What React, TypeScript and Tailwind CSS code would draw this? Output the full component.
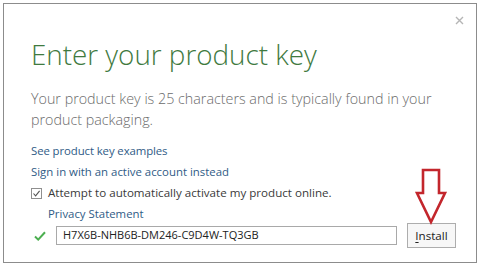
import React from 'react';

const font = { fontFamily: '"Open Sans", "Noto Sans", sans-serif' };

const App: React.FC = () => {
  return (
    <div className="w-[481px] h-[267px] bg-white overflow-hidden pt-[3px] pl-[3px]" style={font}>
      <div className="relative w-[474px] h-[260px] border border-[#8c8c8c] bg-white pl-[27px] pr-[20px]">
        {/* close */}
        <svg className="absolute top-[12px] right-[12px]" width="9" height="9" viewBox="0 0 9 9">
          <path d="M1 1 L8 8 M8 1 L1 8" stroke="#b5b5b5" strokeWidth="1.4" />
        </svg>

        <h1 className="mt-[32px] text-[27.8px] leading-[36px] font-light text-[#3f7a3f]">
          Enter your product key
        </h1>

        <p className="mt-[16px] text-[14.3px] leading-[21px] font-light text-[#6b6b6b] w-[420px]">
          Your product key is 25 characters and is typically found in your product packaging.
        </p>

        <div className="mt-[13px] flex flex-col gap-[5px] text-[11.4px] leading-[16px] text-[#2f5b86]">
          <span className="tracking-[-0.1px]">See product key examples</span>
          <span>Sign in with an active account instead</span>
        </div>

        <label className="mt-[5px] flex items-center gap-[6px] text-[11.6px] leading-[16px] text-[#3a3a3a]">
          <span className="w-[11px] h-[11px] border border-[#8f8f8f] bg-white flex items-center justify-center">
            <svg width="9" height="9" viewBox="0 0 9 9">
              <path d="M1.5 4.5 L3.6 6.8 L7.6 1.8" fill="none" stroke="#555" strokeWidth="1.1" />
            </svg>
          </span>
          Attempt to automatically activate my product online.
        </label>

        <div className="mt-[5px] pl-[17px] text-[11.4px] leading-[16px] text-[#2f5b86]">Privacy Statement</div>

        <div className="mt-[1px] flex items-center">
          <svg className="ml-[3px]" width="12" height="10" viewBox="0 0 12 10">
            <path d="M1 5.5 L4.2 8.6 L11 1.2" fill="none" stroke="#4caf50" strokeWidth="2" />
          </svg>
          <div className="ml-[10px] w-[341px] h-[19px] border border-[#a9a9a9] bg-white pl-[6px] flex items-center text-[11px] text-[#222]">
            H7X6B-NHB6B-DM246-C9D4W-TQ3GB
          </div>
          <button className="ml-[10px] w-[49px] h-[25px] border border-[#adadad] bg-[#f7f7f7] text-[11.6px] text-[#222]">
            <span className="underline underline-offset-2">I</span>nstall
          </button>
        </div>

        {/* annotation arrow */}
        <svg className="absolute left-[410px] top-[164px]" width="34" height="58" viewBox="0 0 34 58">
          <path
            d="M9 2 L25 2 L25 25 L31 25 L17 54 L3 25 L9 25 Z"
            fill="none"
            stroke="#c3262c"
            strokeWidth="2.6"
            strokeLinejoin="miter"
          />
        </svg>
      </div>
    </div>
  );
};

export default App;
